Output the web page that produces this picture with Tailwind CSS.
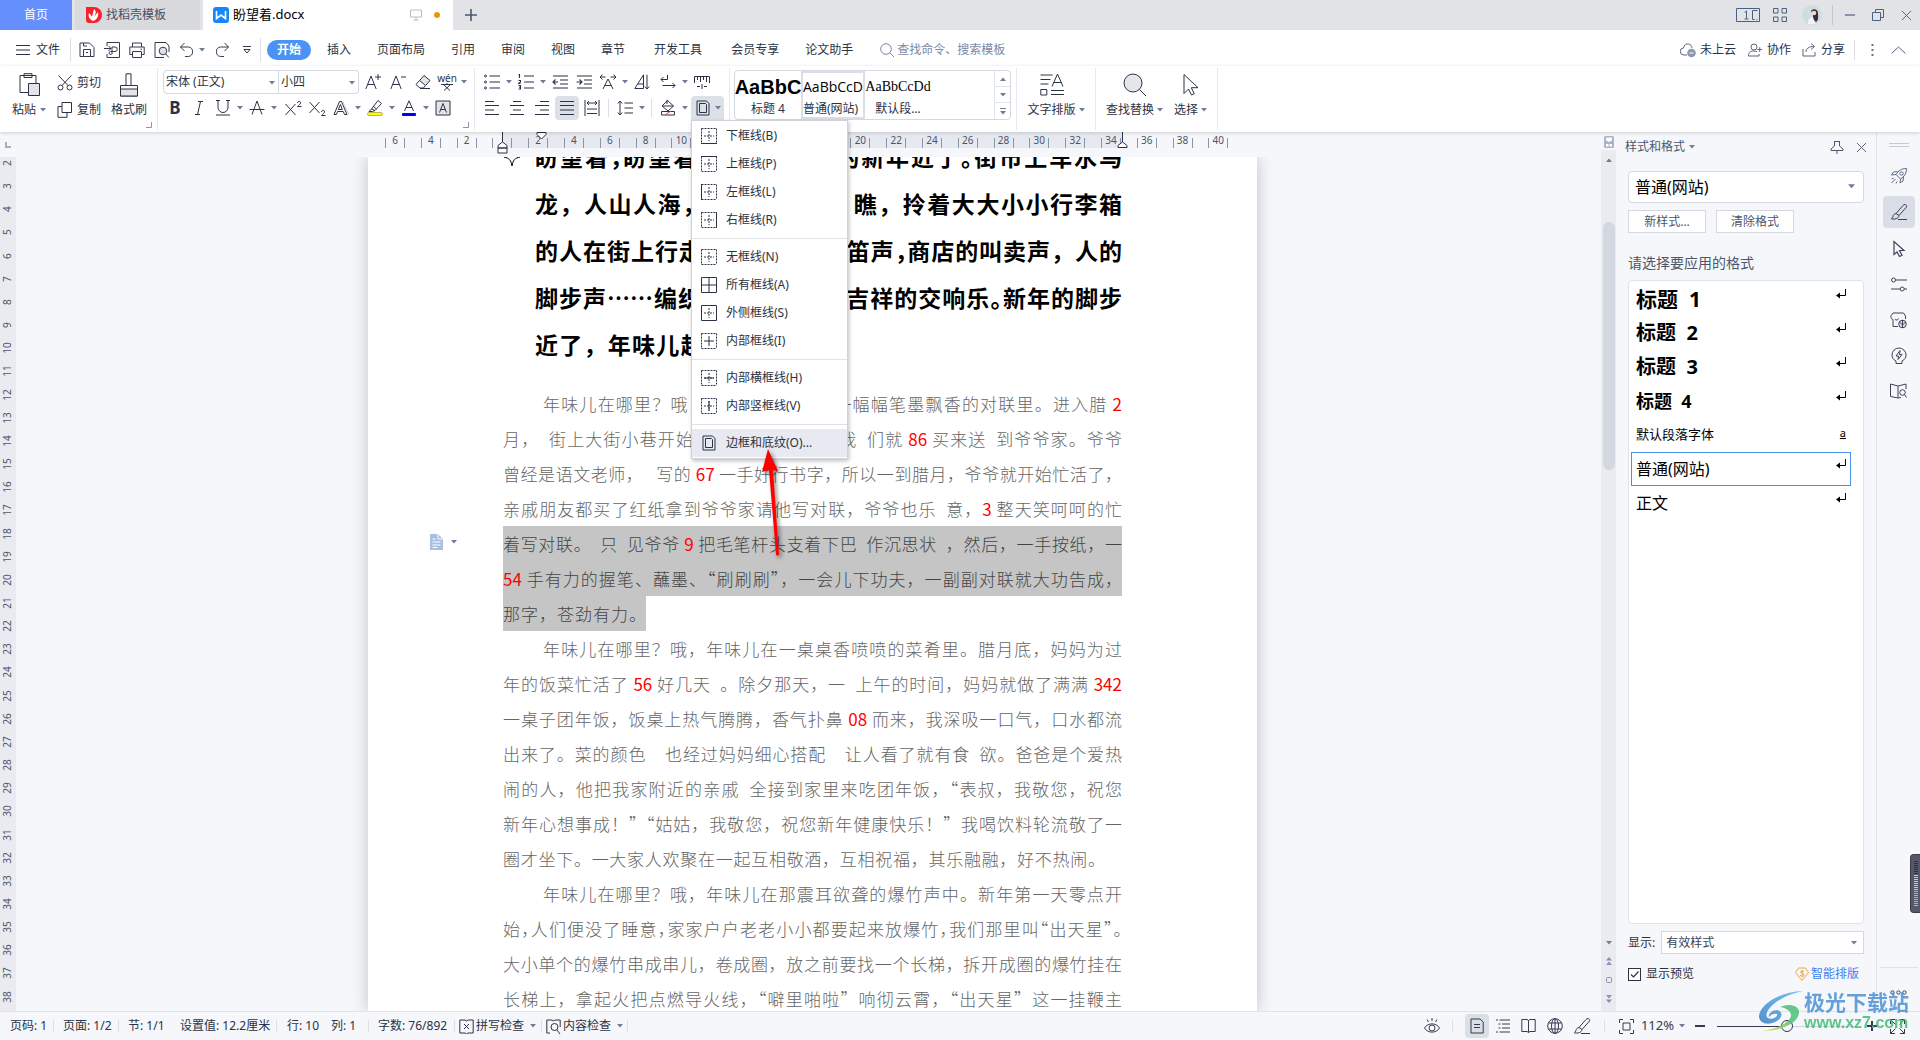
<!DOCTYPE html>
<html lang="zh-CN">
<head>
<meta charset="utf-8">
<title>盼望着.docx</title>
<script src="https://cdn.jsdelivr.net/npm/@tailwindcss/browser@4"></script>
</head>
<body class="h-screen overflow-hidden bg-[#f5f7fa] font-['Noto_Sans','Noto_Sans_CJK_SC',sans-serif] text-xs text-[#2b3245] [&_svg]:shrink-0 [&_svg]:fill-none [&_svg]:stroke-current">

<svg class="absolute size-0" aria-hidden="true">
  <symbol id="caret" viewBox="0 0 6 4"><path d="M0 0h6L3 3.600z" fill="#6f7d98" stroke="none"/></symbol>
  <symbol id="up" viewBox="0 0 6 4"><path d="M0 4h6L3 .4z" fill="#6f7d98" stroke="none"/></symbol>
  <symbol id="corner" viewBox="0 0 6 6"><path d="M5.500 0v5.500H0" stroke="#8a94ab"/></symbol>
  <symbol id="x" viewBox="0 0 12 12"><path d="M1 1l10 10M11 1L1 11"/></symbol>
  <symbol id="ret" viewBox="0 0 10 10"><path d="M9.500 0v6.500H2" stroke="#000"/><path d="M0 6.500l4-3v6z" fill="#000" stroke="none"/></symbol>
  <symbol id="dash" viewBox="0 0 16 16"><path d="M.5.5h15M.5 15.500h15M.5.5v15M15.500.5v15" stroke-dasharray="2 1"/></symbol>
  <symbol id="cross" viewBox="0 0 16 16"><path d="M8 3v10M3 8h10" stroke-dasharray="2 1"/></symbol>
  <symbol id="cursor" viewBox="0 0 18 24"><path d="M2 1.500v19l4.500-4.500 3 6 2.800-1.300-3-6H16z"/></symbol>
  <symbol id="pageborder" viewBox="0 0 14 16"><path d="M1 1h9.500L13 3.500V15H1z"/><path d="M3.500 3.500h6l1 1V12.500h-7z"/></symbol>
  <symbol id="pen" viewBox="0 0 18 18"><path d="M15 1.500c1.500.5 2 1.500 1.500 2.500L9 12.500 6 10.500 13 2.500c.5-.6 1.200-1 2-1zM6 10.500c-2 .5-3 1.500-3 3L1.500 16c3 .3 7 0 7.500-3.500M8 16.500h9"/></symbol>
</svg>

<div class="flex h-full flex-col">

<!-- Window tabs -->
<header class="flex h-[30px] shrink-0 items-center bg-[#e1e3e7] text-[13px]">
  <button class="h-full w-[72px] bg-[#648ffc] text-xs text-white">首页</button>
  <button class="ml-[3px] flex h-full w-[125px] items-center gap-1 bg-[#d9dade] pl-[11px] text-xs text-[#474f63]">
    <svg class="size-4" viewBox="0 0 16 16"><path d="M0 0h8a8 8 0 010 16H3a3 3 0 01-3-3z" fill="#f5222d" stroke="none"/><path d="M7 14C3 12 2 9 3 6l3 3.500L8 2c3 3 1.500 5 0 8l4-5c1 5-1.500 8-5 9z" fill="#fff" stroke="none"/></svg>找稻壳模板</button>
  <button class="ml-[3px] flex h-full w-[250px] items-center gap-1 bg-white pl-[10px] text-left text-black">
    <svg class="size-4" viewBox="0 0 16 16"><rect width="16" height="16" rx="3" fill="#1687fb" stroke="none"/><path d="M3.500 4v7.500L8 8l4.500 3.500V4" stroke="#fff" stroke-width="1.600"/></svg>
    <span class="flex-1">盼望着.docx</span>
    <svg class="h-3 w-3 text-[#b4bccc]" viewBox="0 0 12 12"><path d="M.5 1h11v7H.5zM6 8v3M3.500 11h5"/></svg>
    <span class="mr-[13px] ml-2 size-[6px] rounded-full bg-[#e59a0c]"></span>
  </button>
  <button class="ml-3 text-[#4c5771]" aria-label="新建"><svg class="size-3" viewBox="0 0 12 12"><path d="M6 0v12M0 6h12" stroke-width="1.600"/></svg></button>
  <div class="ml-auto flex items-center pr-2 text-[#4c6080]">
    <svg class="h-[14px] w-6" viewBox="0 0 24 14"><path d="M.5.5h23v13H.5zM16.500 2.500v9M16.500 2.500h5M16.500 11.500h2M20.500 11.500h1M8.500 4.500L10.500 3v8M8.500 11h4"/></svg>
    <svg class="ml-[13px] size-[14px]" viewBox="0 0 14 14"><path d="M.5.5h4.500v4.500H.5zM9 .5h4.500v4.500H9zM.5 9h4.500v4.500H.5zM9 9h4.500v4.500H9z"/></svg>
    <svg class="ml-[15px] size-5" viewBox="0 0 20 20"><circle cx="10" cy="10" r="10" fill="#cfdde2" stroke="none"/><path d="M9 6c2-3 7-2 7 2 0 4 1 7-2 9l-3-3V9z" fill="#3a2c33" stroke="none"/><circle cx="12" cy="8" r="2.300" fill="#f2d5cb" stroke="none"/><path d="M6 19c0-5 2-7 5-7l2 7z" fill="#f1f5f7" stroke="none"/></svg>
    <span class="ml-[10px] h-5 w-px bg-[#c3c7cf]"></span>
    <svg class="ml-3 size-[10px]" viewBox="0 0 10 10"><path d="M0 5h10" stroke-width="1.200"/></svg>
    <svg class="ml-[17px] size-3" viewBox="0 0 12 12"><path d="M.5 3.500h8v8h-8zM3.500 3.500v-3h8v8h-3"/></svg>
    <svg class="ml-[17px] size-[11px]"><use href="#x"/></svg>
  </div>
</header>

<!-- Quick access and ribbon tabs -->
<nav class="flex h-9 shrink-0 items-center bg-white pt-[3px]">
  <button class="ml-4 flex items-center gap-[6px]"><svg class="h-[10px] w-[14px]" viewBox="0 0 14 10"><path d="M0 .5h14M0 5h14M0 9.500h14"/></svg>文件</button>
  <span class="ml-[10px] h-6 w-px bg-[#dcdfe5]"></span>
  <div class="ml-2 flex items-center gap-[9px] text-[#333b4f]">
    <svg class="size-4" viewBox="0 0 16 16"><path d="M1 14.500V1h9.500L15 5.500v9h-3.500v-7h-7v7zM4.500 1v3H8M7 10.500h2M4.500 14.500h7"/></svg>
    <svg class="size-4" viewBox="0 0 16 16"><path d="M3 4V.5h12.500v15H3V12M0 6.500h7M4.500 4L7 6.500 4.500 9M8 12V5h3a2 2 0 010 4.500H6.500a1.500 1.500 0 101.500 2"/></svg>
    <svg class="size-4" viewBox="0 0 16 16"><path d="M3.500 5V1h9v4M3.500 12.500H.8V5h14.400v7.500h-2.700M3.500 9.500h9v6h-9zM11.500 7.200h1.500"/></svg>
    <svg class="size-4" viewBox="0 0 16 16"><path d="M15 10V4l-3-3.500H1v15h9"/><circle cx="9" cy="9" r="3.800" fill="#dfe1e5"/><path d="M11.800 12l3 3.500"/></svg>
    <svg class="size-4" viewBox="0 0 16 16"><path d="M5.500 1L1.500 5l4 4M1.500 5h8a4.800 4.800 0 010 9.500H6"/></svg>
    <svg class="-ml-[5px] h-1 w-[6px]"><use href="#caret"/></svg>
    <svg class="size-4" viewBox="0 0 16 16"><path d="M10.500 1l4 4-4 4M14.500 5h-8a4.800 4.800 0 000 9.500H10"/></svg>
    <svg class="ml-1 h-2 w-2" viewBox="0 0 8 8"><path d="M0 .5h8M1 3.500h6L4 7z"/></svg>
  </div>
  <span class="ml-[9px] h-6 w-px bg-[#dcdfe5]"></span>
  <button class="ml-[6px] h-5 w-11 rounded-full bg-[#4a92f4] font-bold text-white">开始</button>
  <div class="ml-4 flex gap-[26px]">
    <button>插入</button><button>页面布局</button><button>引用</button><button>审阅</button><button>视图</button><button>章节</button><button class="ml-[3px]">开发工具</button><button class="ml-[3px]">会员专享</button><button>论文助手</button>
  </div>
  <label class="ml-[27px] flex items-center gap-[3px] text-[#7c88a3]"><svg class="size-[14px]" viewBox="0 0 14 14"><circle cx="6" cy="6" r="5.300"/><path d="M10 10l4 4"/></svg>
    <input class="w-32 placeholder:text-[#7c88a3]" aria-label="搜索" placeholder="查找命令、搜索模板"></label>
  <div class="ml-auto flex items-center pr-[14px]">
    <button class="flex items-center gap-1"><svg class="size-4 text-[#5b647a]" viewBox="0 0 16 16"><path d="M7 13H4A3.500 3.500 0 013.500 6C4 3 6 1.500 8.500 2c2 .4 3.500 2 3.500 4"/><circle cx="11.500" cy="11" r="4.300" fill="#8b97ae" stroke="none"/><path d="M9.500 11h4" stroke="#fff"/></svg>未上云</button>
    <button class="ml-3 flex items-center gap-[5px]"><svg class="size-[14px] text-[#5b647a]" viewBox="0 0 14 14"><circle cx="6" cy="4" r="3"/><path d="M.5 13c0-4 2-5 5.500-5 1 0 2 .2 3 .7M.5 13H11v-2M9.500 6.500H14M11.700 4.200v4.600"/></svg>协作</button>
    <button class="ml-[11px] flex items-center gap-[5px]"><svg class="size-[14px] text-[#5b647a]" viewBox="0 0 14 14"><path d="M1 6v7h12V9M4 9c0-3.500 3-5.500 8-5.500M9 .5l3.500 3L9 6.500"/></svg>分享</button>
    <span class="ml-[9px] h-5 w-px bg-[#dcdfe5]"></span>
    <svg class="ml-4 h-3 w-[3px]" viewBox="0 0 3 12"><path d="M.5 1h2M.5 6h2M.5 11h2" stroke-width="2" stroke="#6b7387"/></svg>
    <svg class="ml-[17px] h-2 w-[15px] text-[#5b647a]" viewBox="0 0 15 8"><path d="M.5 7.500l7-6.500 7 6.500"/></svg>
  </div>
</nav>

<!-- Ribbon -->
<section class="relative z-20 flex h-[66px] shrink-0 items-start bg-white pt-[2px] shadow-[0_1px_4px_rgba(0,0,0,0.16)]">
  <!-- Clipboard -->
  <div class="relative flex h-[62px] w-[158px] border-r border-[#e8eaee] pl-3">
    <button class="flex w-[42px] flex-col items-start pt-[5px]"><svg class="ml-[7px] size-6" viewBox="0 0 24 24"><path d="M9 19.500H1V2.500h16V10M5 2.500V.7h8v1.800M5 4.500h8v-2H5z"/><path d="M9.500 10.500h11v12h-11z" fill="#e2e4e8"/></svg><span class="flex items-center gap-1 leading-[26px]">粘贴<svg class="h-1 w-[6px]"><use href="#caret"/></svg></span></button>
    <div class="flex w-12 flex-col gap-[5px] pt-1">
      <button class="flex items-center gap-1 leading-[22px]"><svg class="ml-[3px] size-4" viewBox="0 0 16 16"><circle cx="3.500" cy="12.500" r="2.500"/><circle cx="12.500" cy="12.500" r="2.500"/><path d="M1.500.5l9.500 10M14.500.5L5 10.500"/></svg>剪切</button>
      <button class="flex items-center gap-1 leading-[22px]"><svg class="ml-[3px] size-4" viewBox="0 0 16 16"><path d="M5 .5h9.500v10H5zM5 4.500H1v10.800h9V10.500"/></svg>复制</button>
    </div>
    <button class="ml-[7px] flex w-10 flex-col items-center pt-[5px]"><svg class="size-6" viewBox="0 0 24 24"><path d="M3.500 12.500h17v10.500h-17z" fill="#fff"/><path d="M3.500 16h17v7h-17z" fill="#e2e4e8"/><path d="M9 12.500V.8h5v11.700"/></svg><span class="leading-[26px]">格式刷</span></button>
    <svg class="absolute right-[5px] bottom-[2px] size-[6px]"><use href="#corner"/></svg>
  </div>

  <!-- Font -->
  <div class="relative h-[62px] w-[317px] border-r border-[#e8eaee] pt-[2px] pl-[5px]">
    <div class="flex h-6 items-center">
      <div class="relative h-6 w-[116px] rounded-l-sm border border-[#d5d8de]"><select aria-label="字体" class="h-full w-full appearance-none pl-[2px]"><option>宋体 (正文)</option></select><svg class="absolute top-[10px] right-[3px] h-1 w-[6px]"><use href="#caret"/></svg></div>
      <div class="relative h-6 w-20 rounded-r-sm border border-l-0 border-[#d5d8de]"><select aria-label="字号" class="h-full w-full appearance-none pl-[2px]"><option>小四</option></select><svg class="absolute top-[10px] right-[3px] h-1 w-[6px]"><use href="#caret"/></svg></div>
      <button class="ml-[2px] flex w-6 justify-center" aria-label="增大字号"><svg class="size-4" viewBox="0 0 16 16"><path d="M.8 15L6 2l5.200 13M2.700 10.500h6.600M13 0v6M10 3h6"/></svg></button>
      <button class="flex w-[26px] justify-center" aria-label="减小字号"><svg class="size-4" viewBox="0 0 16 16"><path d="M.8 15L6 2l5.200 13M2.700 10.500h6.600M11 3h5"/></svg></button>
      <button class="flex w-6 justify-center" aria-label="清除格式"><svg class="size-4" viewBox="0 0 16 16"><path d="M9 1.500l6 5-4.500 5-6-5z" fill="#e2e4e8"/><path d="M4.500 6.500L1 10.500 5 14h3.500l2-2.500M5 14.500h10"/></svg></button>
      <button class="flex w-6 flex-col items-center text-[10px] leading-[9px]" aria-label="拼音指南"><span>wén</span><svg class="h-2 w-3" viewBox="0 0 12 8"><path d="M0 1.500h12M6 0v1.500M3 2l6 5.500M9 2L3 7.500"/></svg></button>
      <svg class="h-1 w-[10px]"><use href="#caret"/></svg>
    </div>
    <div class="mt-[3px] flex h-[22px] items-center [&_button]:flex [&_button]:w-6 [&_button]:justify-center">
      <button aria-label="加粗"><span class="text-[17px] leading-5 font-bold">B</span></button>
      <button aria-label="倾斜"><svg class="size-4" viewBox="0 0 16 16"><path d="M7 1.500h5M4 14.500h5M9.500 1.500l-3 13"/></svg></button>
      <button aria-label="下划线"><svg class="size-4" viewBox="0 0 16 16"><path d="M1 .5h4M11 .5h4M3 .5v7a5 5 0 0010 0v-7M1 15h14"/></svg></button>
      <svg class="h-1 w-[10px]"><use href="#caret"/></svg>
      <button aria-label="删除线"><svg class="size-4" viewBox="0 0 16 16"><path d="M3 14.500L8 1l5 13.500M.5 9.500h15"/></svg></button>
      <svg class="h-1 w-[10px]"><use href="#caret"/></svg>
      <button class="ml-[2px]" aria-label="上标"><svg class="size-[17px]" viewBox="0 0 17 16"><path d="M.5 3.500l10 11M10.500 3.500l-10 11M12.500 2.500c.3-2.500 3.500-2 3 0-.2 1.200-1.500 2-3 3.500h4"/></svg></button>
      <button aria-label="下标"><svg class="size-[17px]" viewBox="0 0 17 16"><path d="M.5 1.500l10 11M10.500 1.500l-10 11M12.500 11.500c.3-2.500 3.500-2 3 0-.2 1.200-1.500 2-3 3.500h4"/></svg></button>
      <button aria-label="文字效果"><svg class="size-4" viewBox="0 0 16 16"><path d="M1 14.500L6.500 1.500h2l5.500 13h-2.500l-1.200-3H4.600l-1.200 3zM5.300 9.500h4L7.500 4.500z"/><path d="M9.500 1.500L15.500 14" stroke="#c5cad4"/></svg></button>
      <svg class="h-1 w-[10px]"><use href="#caret"/></svg>
      <button aria-label="突出显示"><svg class="size-4" viewBox="0 0 16 16"><path d="M11 .5l3.500 3L8 10.500 4.500 9zM4.500 9L2 11.500h3.500L8 10.500M6 6l3.500 3"/><rect x=".5" y="12.500" width="15" height="3" rx="1.500" fill="#ff0" stroke="#8a8a30" stroke-width=".6"/></svg></button>
      <svg class="h-1 w-[10px]"><use href="#caret"/></svg>
      <button aria-label="字体颜色"><svg class="size-4" viewBox="0 0 16 16"><path d="M3.500 11L8 .8 12.500 11M5 7.500h6"/><rect x="1" y="13" width="14" height="3" rx="1" fill="#00f" stroke="none"/></svg></button>
      <svg class="h-1 w-[10px]"><use href="#caret"/></svg>
      <button aria-label="字符底纹"><svg class="size-4" viewBox="0 0 16 16"><path d="M1 1h14v14H1z" fill="#e2e4e8"/><path d="M4.500 12.500L8 3.500l3.500 9M5.800 9.500h4.400"/></svg></button>
    </div>
    <svg class="absolute right-[5px] bottom-[2px] size-[6px]"><use href="#corner"/></svg>
  </div>

  <!-- Paragraph -->
  <div class="h-[62px] w-[255px] border-r border-[#e8eaee] pt-[2px] pl-[5px]">
    <div class="flex h-6 items-center [&_button]:flex [&_button]:w-6 [&_button]:justify-center">
      <button aria-label="项目符号"><svg class="size-4" viewBox="0 0 16 16"><circle cx="1.500" cy="2" r="1"/><circle cx="1.500" cy="8" r="1"/><circle cx="1.500" cy="14" r="1"/><path d="M5.500 2H16M5.500 8H16M5.500 14H16" stroke-width="1.200"/></svg></button>
      <svg class="h-1 w-[10px]"><use href="#caret"/></svg>
      <button aria-label="编号"><svg class="size-4" viewBox="0 0 16 16"><path d="M.5 1l1-.5V4M.5 6.500h2v1.500l-2 1.500h2M.5 11.500h2V15h-2M1 13.200h1.500M6 2h10M6 8h10M6 14h10" stroke-width="1.100"/></svg></button>
      <svg class="h-1 w-[10px]"><use href="#caret"/></svg>
      <button aria-label="减少缩进"><svg class="size-4" viewBox="0 0 16 16"><path d="M1 2h15M8 6h8M8 10h8M1 14h15M6 8H1M3.500 5.500L1 8l2.500 2.500" stroke-width="1.100"/></svg></button>
      <button aria-label="增加缩进"><svg class="size-4" viewBox="0 0 16 16"><path d="M1 2h15M8 6h8M8 10h8M1 14h15M.5 8h5M3.500 5.500L6 8l-2.500 2.500" stroke-width="1.100"/></svg></button>
      <button aria-label="中文版式"><svg class="size-4" viewBox="0 0 16 16"><path d="M3 15l5-10 5 10M5 11.500h6M0 3h5.500M2.500.5L0 3l2.500 2.500M10.500 3H16M13.500.5L16 3l-2.500 2.500"/></svg></button>
      <svg class="h-1 w-[10px]"><use href="#caret"/></svg>
      <button aria-label="排序"><svg class="size-4" viewBox="0 0 16 16"><path d="M.8 14.500L9.500.8v13.700zM4 10h5.500M13 .8v14M10.800 12.500l2.200 2.500 2.200-2.500"/></svg></button>
      <button class="ml-[2px]" aria-label="换行符"><svg class="size-4" viewBox="0 0 16 16"><path d="M7.500 1v4.500H1M3.500 3L1 5.500 3.500 8M2.500 11.500H15M12.500 9l2.500 2.500-2.500 2.500"/></svg></button>
      <svg class="h-1 w-[10px]"><use href="#caret"/></svg>
      <button aria-label="标尺"><svg class="size-4" viewBox="0 0 16 16"><path d="M.5 9V2.500h15V9M3.500 3v3M6.500 3v5M9.500 3v3M12.500 3v5M3 12.500h3M10 12.500h3M8 10v5"/></svg></button>
    </div>
    <div class="mt-[3px] flex h-[22px] items-center [&_button]:flex [&_button]:w-6 [&_button]:justify-center">
      <button aria-label="左对齐"><svg class="size-4" viewBox="0 0 16 16"><path d="M1 1.500h9M1 5.500h14M1 10h9M1 14.500h14" stroke-width="1.200"/></svg></button>
      <button class="ml-px" aria-label="居中"><svg class="size-4" viewBox="0 0 16 16"><path d="M4 1.500h8M1 5.500h14M4 10h8M1 14.500h14" stroke-width="1.200"/></svg></button>
      <button class="ml-px" aria-label="右对齐"><svg class="size-4" viewBox="0 0 16 16"><path d="M6 1.500h9M1 5.500h14M6 10h9M1 14.500h14" stroke-width="1.200"/></svg></button>
      <button class="ml-px h-6 items-center rounded-sm bg-[#dce1e7]" aria-label="两端对齐"><svg class="size-4" viewBox="0 0 16 16"><path d="M1 1.500h14M1 5.500h14M1 10h14M1 14.500h14" stroke-width="1.200"/></svg></button>
      <button class="ml-px" aria-label="分散对齐"><svg class="size-4" viewBox="0 0 16 16"><path d="M1 0v16M15 0v16M3 3h10M5 1L3 3l2 2M11 1l2 2-2 2M3 9h10M3 13.500h10"/></svg></button>
      <span class="mx-1 h-[18px] w-px bg-[#dcdfe5]"></span>
      <button aria-label="行距"><svg class="size-4" viewBox="0 0 16 16"><path d="M3 1v14M.8 3.500L3 1l2.200 2.500M.8 12.500L3 15l2.200-2.500M7.500 3H16M7.500 8H16M7.500 13H16"/></svg></button>
      <svg class="h-1 w-[10px]"><use href="#caret"/></svg>
      <span class="mx-1 h-[18px] w-px bg-[#dcdfe5]"></span>
      <button aria-label="底纹颜色"><svg class="size-4" viewBox="0 0 16 16"><path d="M7.500.5l6 5.500L8 11 2 6zM2 6h11.500M7 0v4"/><path d="M1.500 11.500h13v3.500h-13z" fill="#fff"/><path d="M5 15l6-4" stroke="#e04040"/></svg></button>
      <svg class="h-1 w-[10px]"><use href="#caret"/></svg>
      <div class="relative ml-px h-6 w-[33px] rounded-t-sm bg-[#dce1e7]">
        <div class="flex h-full items-center"><button aria-label="边框"><svg class="h-4 w-[14px]"><use href="#pageborder"/></svg></button><svg class="h-1 w-[6px]"><use href="#caret"/></svg></div>
        <!-- Border menu -->
        <div class="absolute top-6 left-0 w-[157px] border border-[#cfd2d8] bg-white py-px shadow-[1px_2px_4px_rgba(0,0,0,0.25)] [&_.item]:h-7 [&_.item]:w-full [&_.item]:items-center [&_.item]:justify-start [&_.item]:gap-[9px] [&_.item]:pl-[9px]">
          <button class="item"><svg class="size-4"><use href="#dash"/><use href="#cross"/><path d="M0 15.500h16"/></svg>下框线(B)</button>
          <button class="item"><svg class="size-4"><use href="#dash"/><use href="#cross"/><path d="M0 .5h16"/></svg>上框线(P)</button>
          <button class="item"><svg class="size-4"><use href="#dash"/><use href="#cross"/><path d="M.5 0v16"/></svg>左框线(L)</button>
          <button class="item"><svg class="size-4"><use href="#dash"/><use href="#cross"/><path d="M15.500 0v16"/></svg>右框线(R)</button>
          <hr class="my-1 border-[#e0e2e6]">
          <button class="item"><svg class="size-4"><use href="#dash"/><use href="#cross"/></svg>无框线(N)</button>
          <button class="item"><svg class="size-4"><path d="M.5.5h15v15H.5zM8 0v16M0 8h16"/></svg>所有框线(A)</button>
          <button class="item"><svg class="size-4"><use href="#cross"/><path d="M.5.5h15v15H.5z"/></svg>外侧框线(S)</button>
          <button class="item"><svg class="size-4"><use href="#dash"/><path d="M8 3v10M3 8h10"/></svg>内部框线(I)</button>
          <hr class="my-1 border-[#e0e2e6]">
          <button class="item"><svg class="size-4"><use href="#dash"/><use href="#cross"/><path d="M3 8h10"/></svg>内部横框线(H)</button>
          <button class="item"><svg class="size-4"><use href="#dash"/><use href="#cross"/><path d="M8 3v10"/></svg>内部竖框线(V)</button>
          <hr class="my-1 border-[#e0e2e6]">
          <button class="item bg-[#e7eaf0]"><svg class="h-4 w-4"><use href="#pageborder"/></svg>边框和底纹(O)...</button>
          <svg class="absolute top-[326px] left-[67px] h-[112px] w-7 drop-shadow-[2px_2px_2px_rgba(0,0,0,0.5)]" viewBox="0 0 28 112"><path d="M9 2L19 24l-5-1 6 84c0 2-3 2-3 0L10 23l-7 2z" fill="#f00" stroke="none"/></svg>
        </div>
      </div>
    </div>
  </div>

  <!-- Style gallery -->
  <div class="h-[62px] w-[287px] border-r border-[#e8eaee] pt-[2px] pl-1">
    <div class="flex h-[50px] w-[277px] rounded-sm border border-[#d5d8de]">
      <button class="flex w-[66px] flex-col items-center overflow-hidden"><span class="h-[30px] font-['Liberation_Sans',sans-serif] text-[20px] leading-[32px] font-bold text-black">AaBbC</span>标题 4</button>
      <button class="flex w-16 flex-col items-start overflow-hidden border-2 border-[#dcdee5]"><span class="h-7 font-['Open_Sans',sans-serif] text-[14px] leading-[28px] whitespace-nowrap text-black">AaBbCcD</span>普通(网站)</button>
      <button class="flex w-[66px] flex-col items-center overflow-hidden"><span class="h-[30px] font-['Liberation_Serif',serif] text-[14px] leading-[32px] text-black">AaBbCcDd</span>默认段...</button>
      <div class="ml-auto grid w-4 grid-rows-3 divide-y divide-[#e1e4e9] border-l border-[#e1e4e9] [&_button]:flex [&_button]:items-center [&_button]:justify-center">
        <button aria-label="上一行"><svg class="h-1 w-[6px]"><use href="#up"/></svg></button>
        <button aria-label="下一行"><svg class="h-1 w-[6px]"><use href="#caret"/></svg></button>
        <button aria-label="更多样式"><svg class="h-[7px] w-[6px]" viewBox="0 0 6 7"><path d="M0 .5h6" stroke="#6f7d98"/><path d="M0 3h6L3 6.500z" fill="#6f7d98" stroke="none"/></svg></button>
      </div>
    </div>
  </div>

  <div class="flex h-[62px] w-[79px] justify-center border-r border-[#e8eaee] pt-[5px]">
    <button class="flex flex-col items-center"><svg class="mr-2 size-6" viewBox="0 0 24 24"><path d="M.5 2h12M.5 6.500h10M.5 11h8M.8 16.500h6v5.500h-6zM11 17.500h13M11 21.500h13M12 13.500L17.500 1 23 13.500M13.500 9.500h8"/></svg><span class="flex items-center gap-[3px] leading-[26px]">文字排版<svg class="h-1 w-[6px]"><use href="#caret"/></svg></span></button>
  </div>
  <div class="flex h-[62px] w-[122px] border-r border-[#e8eaee] pt-[5px] pl-[10px]">
    <button class="flex flex-col items-center"><svg class="size-6" viewBox="0 0 24 24"><circle cx="10" cy="10" r="9" fill="#e4e6e9"/><path d="M16.500 16.500l6.500 6.500"/></svg><span class="flex items-center gap-[3px] leading-[26px]">查找替换<svg class="h-1 w-[6px]"><use href="#caret"/></svg></span></button>
    <button class="ml-[11px] flex flex-col items-center"><svg class="h-6 w-[18px]"><use href="#cursor"/></svg><span class="flex items-center gap-[3px] leading-[26px]">选择<svg class="h-1 w-[6px]"><use href="#caret"/></svg></span></button>
  </div>
</section>

<!-- Workspace -->
<main class="flex min-h-0 flex-1">
  <div class="flex min-w-0 flex-1 flex-col">
    <!-- Horizontal ruler -->
    <div class="flex h-[25px] shrink-0">
      <div class="flex w-4 items-center justify-center"><svg class="size-[6px]" viewBox="0 0 6 6"><path d="M1 0v5h5" stroke="#a9afbd" stroke-width="2"/></svg></div>
      <div class="flex flex-1 justify-center pl-2">
        <div class="relative w-[889px]">
          <div class="ml-[134px] h-4 w-[621px] bg-[#e6e9f0]"></div>
          <div id="hruler" class="absolute top-0 left-[17px] flex h-4 w-[859px] text-[10px] leading-[15px] text-[#4d5568]"></div>
          <svg class="absolute top-0 left-[129px] h-[22px] w-[11px]" viewBox="0 0 11 22"><path d="M5.500 0v10M1 16v-2.500L5.500 10l4.500 3.500V16zM1 16h9v5H1z" fill="#fff"/></svg>
          <svg class="absolute top-0 left-[168px] h-2 w-[11px]" viewBox="0 0 11 8"><path d="M1 .5h9v2L5.500 7 1 2.500z" fill="#fff"/></svg>
          <svg class="absolute top-0 left-[749px] h-4 w-[11px]" viewBox="0 0 11 16"><path d="M5.500 0v10M1 15.500v-2L5.500 10l4.500 3.500v2z" fill="#fff"/></svg>
        </div>
      </div>
    </div>
    <div class="flex min-h-0 flex-1">
      <!-- Vertical ruler -->
      <div id="vruler" class="flex w-4 shrink-0 flex-col justify-between bg-[#e9ebf1] pb-2 text-[10px] text-[#4d5568]"></div>
      <div class="flex flex-1 justify-center overflow-hidden pl-2">
        <article class="relative w-[889px] shrink-0 bg-white px-[135px] font-['Noto_Sans_CJK_SC',sans-serif] shadow-[0_0_16px_rgba(0,0,0,0.22)] [&_i]:not-italic [&_i]:[font-feature-settings:'halt'] [&_p]:[text-align-last:justify] [&_p]:whitespace-nowrap">
          <section class="relative -mt-6 pl-8 text-[23px] leading-[47px] font-bold text-black">
            <svg class="absolute top-[14px] left-0 h-5 w-[18px]" viewBox="0 0 18 20"><path d="M9 1c1 6 3 8 8 9-5 1-7 3-8 9-1-6-3-8-8-9 5-1 7-3 8-9z"/></svg>
            <p>盼望着<i>，</i>盼望着<i>，</i>热闹又喜庆的新年近了<i>。</i>街市上车水马</p>
            <p>龙，人山人海，好不热闹呀，瞧，拎着大大小小行李箱</p>
            <p>的人在街上行走，小汽车的鸣笛声<i>，</i>商店的叫卖声，人的</p>
            <p>脚步声……编织成为了一首首吉祥的交响乐<i>。</i>新年的脚步</p>
            <p class="w-[290px]">近了，年味儿越来越浓了。</p>
          </section>
          <section class="relative mt-[18px] text-[17px] leading-[35px] font-light text-[#666] [&_b]:font-normal [&_b]:text-[#f00]">
            <p class="pl-10">年味儿在哪里？哦，年味儿在爷爷那一幅幅笔墨飘香的对联里。进入腊 <b>2</b></p>
            <p>月，&nbsp; 街上大街小巷开始卖起了红纸对联。我&nbsp; 们就 <b>86</b> 买来送&nbsp; 到爷爷家。爷爷</p>
            <p>曾经是语文老师，&nbsp; &nbsp;写的 <b>67</b> 一手好行书字，所以一到腊月，爷爷就开始忙活了，</p>
            <p>亲戚朋友都买了红纸拿到爷爷家请他写对联，爷爷也乐&nbsp; 意，<b>3</b> 整天笑呵呵的忙</p>
            <div class="bg-[#c5c5c5] text-[#444] [&_b]:text-[#c80000]">
              <p>着写对联。&nbsp; 只&nbsp; 见爷爷 <b>9</b> 把毛笔杆头支着下巴&nbsp; 作沉思状&nbsp; ，然后，一手按纸，一</p>
              <p><b>54</b> 手有力的握笔、蘸墨、“刷刷刷”，一会儿下功夫，一副副对联就大功告成，</p>
            </div>
            <p class="w-[143px] bg-[#c5c5c5] text-[#444]">那字，苍劲有力。</p>
            <p class="pl-10">年味儿在哪里？哦，年味儿在一桌桌香喷喷的菜肴里。腊月底，妈妈为过</p>
            <p>年的饭菜忙活了 <b>56</b> 好几天&nbsp; 。除夕那天，一&nbsp; 上午的时间，妈妈就做了满满 <b>342</b></p>
            <p>一桌子团年饭，饭桌上热气腾腾，香气扑鼻 <b>08</b> 而来，我深吸一口气，口水都流</p>
            <p>出来了。菜的颜色&nbsp; &nbsp; 也经过妈妈细心搭配&nbsp; &nbsp; 让人看了就有食&nbsp; 欲。爸爸是个爱热</p>
            <p>闹的人，他把我家附近的亲戚&nbsp; 全接到家里来吃团年饭，“表叔，我敬您，祝您</p>
            <p>新年心想事成！”“姑姑，我敬您，祝您新年健康快乐！”我喝饮料轮流敬了一</p>
            <p class="w-[602px]">圈才坐下。一大家人欢聚在一起互相敬酒，互相祝福，其乐融融，好不热闹。</p>
            <p class="pl-10">年味儿在哪里？哦，年味儿在那震耳欲聋的爆竹声中。新年第一天零点开</p>
            <p>始<i>，</i>人们便没了睡意<i>，</i>家家户户老老小小都要起来放爆竹<i>，</i>我们那里叫<i>“</i>出天星<i>”。</i></p>
            <p>大小单个的爆竹串成串儿，卷成圈，放之前要找一个长梯，拆开成圈的爆竹挂在</p>
            <p>长梯上，拿起火把点燃导火线，“噼里啪啦”响彻云霄，“出天星”这一挂鞭主</p>
            <button class="absolute top-[148px] -left-[73px] flex items-center gap-2" aria-label="段落布局"><svg class="h-4 w-[13px]" viewBox="0 0 13 16"><path d="M0 0h8l5 5v11H0z" fill="#a9bfe2" stroke="none"/><path d="M8 0v5h5M2.500 5h3M2.500 8h8M2.500 11h8M2.500 13.500h5" stroke="#fff"/></svg><svg class="h-1 w-[6px]"><use href="#caret"/></svg></button>
          </section>
        </article>
      </div>
    </div>
  </div>

  <!-- Vertical scrollbar -->
  <div class="flex w-[15px] shrink-0 flex-col items-center">
    <svg class="mt-1 h-3 w-[10px]" viewBox="0 0 10 12"><rect width="10" height="12" rx="1.500" fill="#a9b4cb" stroke="none"/><path d="M2 1.500h6v3L5 6 2 4.500zM2 8h2.500v2.500H2zM5.500 8H8v2.500H5.500z" fill="#fff" stroke="none"/></svg>
    <div class="mt-[2px] flex w-full flex-1 flex-col items-center bg-[#e9ebf1] pt-2 pb-2">
      <svg class="h-1 w-[6px]"><use href="#up"/></svg>
      <div class="mt-[60px] h-[248px] w-3 rounded-full bg-[#d3d7e0]"></div>
      <div class="mt-auto flex flex-col items-center gap-3">
        <svg class="h-1 w-[6px]"><use href="#caret"/></svg>
        <svg class="h-2 w-[6px]" viewBox="0 0 6 8"><path d="M0 3.500h6L3 0zM0 8h6L3 4.500z" fill="#8493b0" stroke="none"/></svg>
        <svg class="size-[6px]" viewBox="0 0 6 6"><rect x=".5" y=".5" width="5" height="5" rx="1" stroke="#8493b0"/></svg>
        <svg class="h-2 w-[6px]" viewBox="0 0 6 8"><path d="M0 0h6L3 3.500zM0 4.500h6L3 8z" fill="#8493b0" stroke="none"/></svg>
      </div>
    </div>
  </div>

  <!-- Styles pane -->
  <aside class="flex w-[261px] shrink-0 flex-col border-r border-[#e0e3e8] px-3">
    <div class="flex h-[39px] items-start pt-[7px] text-[#4d566c]">
      <h2 class="-ml-[3px] flex items-center gap-1">样式和格式<svg class="h-1 w-[6px]"><use href="#caret"/></svg></h2>
      <svg class="mt-[2px] ml-auto h-[13px] w-[14px]" viewBox="0 0 14 13"><path d="M4 .5h6M4.500.5v4.500L1 8v1.500h12V8L9.500 5V.5M7 9.500V13"/></svg>
      <svg class="mt-[3px] mr-[-3px] ml-3 size-[11px]"><use href="#x"/></svg>
    </div>
    <div class="relative h-8 rounded-sm border border-[#d5d8de] bg-white"><select aria-label="当前样式" class="h-full w-full appearance-none pl-[6px] text-base text-black"><option>普通(网站)</option></select><svg class="absolute top-[12px] right-[8px] h-[5px] w-[7px]"><use href="#caret"/></svg></div>
    <div class="mt-[7px] flex gap-[10px]">
      <button class="h-[23px] w-[78px] border border-[#d5d8de] bg-white text-[#4d566c]">新样式...</button>
      <button class="h-[23px] w-[78px] border border-[#d5d8de] bg-white text-[#4d566c]">清除格式</button>
    </div>
    <h3 class="mt-5 h-[27px] text-sm text-[#4d566c]">请选择要应用的格式</h3>
    <ul class="flex-1 rounded-sm border border-[#dfe2e7] bg-white py-px pr-3 pl-[2px] text-black [&_button]:flex [&_button]:h-[34px] [&_button]:w-full [&_button]:items-center [&_button]:justify-between [&_button]:pr-[5px] [&_button]:pl-[5px] [&_button_svg]:mb-[10px]">
      <li><button><span class="text-[21px] leading-8 font-bold">标题&nbsp; 1</span><svg class="size-[10px]"><use href="#ret"/></svg></button></li>
      <li><button><span class="text-[20px] leading-8 font-bold">标题&nbsp; 2</span><svg class="size-[10px]"><use href="#ret"/></svg></button></li>
      <li><button><span class="text-[20px] leading-8 font-bold">标题&nbsp; 3</span><svg class="size-[10px]"><use href="#ret"/></svg></button></li>
      <li><button><span class="text-[18px] leading-8 font-bold">标题&nbsp; 4</span><svg class="size-[10px]"><use href="#ret"/></svg></button></li>
      <li><button><span class="text-[13px]">默认段落字体</span><span class="mb-1 text-[11px] underline">a</span></button></li>
      <li class="border border-[#4a90e8] [&>button]:h-8 [&>button]:px-1"><button><span class="text-base">普通(网站)</span><svg class="size-[10px]"><use href="#ret"/></svg></button></li>
      <li><button><span class="text-base">正文</span><svg class="size-[10px]"><use href="#ret"/></svg></button></li>
    </ul>
    <div class="mt-[7px] flex items-center gap-[6px]"><label for="show" class="whitespace-nowrap">显示:</label>
      <div class="relative h-[23px] flex-1 border border-[#d5d8de] bg-white"><select id="show" class="h-full w-full appearance-none pl-1 text-[#3c4458]"><option>有效样式</option></select><svg class="absolute top-[9px] right-[6px] h-1 w-[6px]"><use href="#caret"/></svg></div></div>
    <div class="mt-[11px] mb-7 flex h-[18px] items-center">
      <label class="flex items-center gap-[5px]"><span class="relative size-[13px]"><input type="checkbox" checked class="block size-[13px] appearance-none border border-[#2b3245] bg-white"><svg class="pointer-events-none absolute inset-0 size-[13px]" viewBox="0 0 13 13"><path d="M3 6.500L5.500 9 10.500 3.500" stroke-width="1.200"/></svg></span>显示预览</label>
      <a href="#" class="mr-[5px] ml-auto flex items-center gap-[2px] text-[#3f7ef0]"><svg class="size-[14px] text-[#eda73a]" viewBox="0 0 14 14"><path d="M3.500 1h7l3 4.500L7 13.500.5 5.500z"/><path d="M9 4.500c-1-1-3.500-.8-3.500.5S9 6 9 7.800 6 9.500 5 8.200M7.200 3v7.500"/></svg>智能排版</a>
    </div>
  </aside>

  <!-- Tool rail -->
  <aside class="flex w-[43px] shrink-0 flex-col items-center text-[#3b4357]">
    <span class="mt-[11px] h-1 w-5 border-y border-[#c6cad2]"></span>
    <svg class="mt-5 size-[18px] text-[#5d6a86]" viewBox="0 0 18 18"><path d="M16.500 1.500c-5 0-8 2-10.500 6l4.500 4.500c4-2.500 6-5.500 6-10.500zM6 7.500L1.500 8l2-3 4-.5M10.500 12L10 16l3-2 .5-4M1.500 12l2-1M1.500 16l4-4M6 16.500l1-2"/><circle cx="11.500" cy="6.500" r="1.700"/></svg>
    <button class="mt-[11px] flex h-8 w-8 items-center justify-center rounded-sm bg-[#d9dee6]" aria-label="样式"><svg class="size-[18px]"><use href="#pen"/></svg></button>
    <svg class="mt-3 h-[18px] w-[14px]" viewBox="0 0 14 18"><path d="M2 1.500v13l3-2.500 2.500 4.500 2.500-1.300-2.500-4.700h4.500z" stroke-width="1.200"/></svg>
    <svg class="mt-[19px] size-4" viewBox="0 0 16 16"><circle cx="2.500" cy="3" r="2"/><path d="M4.500 3H16M0 12h9M13 12h3"/><circle cx="11.200" cy="12" r="2"/></svg>
    <svg class="mt-[19px] size-[17px]" viewBox="0 0 17 17"><path d="M3 7.500v7h5M3 7.500C.5 7 .5 4 1.500 3L3 1h10.500L15.500 4v3M5 7.500c1.500 1 3 .5 3.500-1"/><circle cx="12.500" cy="12" r="3.800" fill="#dfe2e8"/><path d="M12.500 8v8M9.500 10l3 3 3-3"/></svg>
    <svg class="mt-[18px] size-[18px]" viewBox="0 0 18 18"><path d="M6 14C3 12.500 2 10.500 2 8a7 7 0 0114 0c0 2.500-1 4.500-4 6v2.500H6z"/><path d="M10 3.500L6 9h2.500L8 12.500l4-5H9.500z"/></svg>
    <svg class="mt-[18px] h-4 w-[17px]" viewBox="0 0 17 16"><path d="M8 3L.5 1v12.500L8 15zM8 3l8-2v5M8 15l3-.5"/><circle cx="12.500" cy="9.500" r="2.800"/><path d="M14.500 11.500l2 3"/></svg>
    <span class="mt-auto h-px w-[38px] bg-[#dfe2e7]"></span>
    <svg class="mt-[22px] mb-4 h-[5px] w-[17px]" viewBox="0 0 17 5"><circle cx="2.500" cy="2.500" r="1.700"/><circle cx="8.500" cy="2.500" r="1.700"/><circle cx="14.500" cy="2.500" r="1.700"/></svg>
  </aside>
</main>

<!-- Status bar -->
<footer class="flex h-[29px] shrink-0 items-center border-t border-[#e0e3e8] pr-[15px] whitespace-nowrap [&_.bar]:h-3 [&_.bar]:w-px [&_.bar]:bg-[#dcdfe5]">
  <span class="ml-[10px] w-[43px]">页码: 1</span><i class="bar"></i>
  <span class="ml-[9px] w-[55px]">页面: 1/2</span><i class="bar"></i>
  <span class="ml-[9px] w-[52px]">节: 1/1</span>
  <span class="w-24">设置值: 12.2厘米</span><i class="bar"></i>
  <span class="ml-[10px] w-11">行: 10</span>
  <span class="w-[37px]">列: 1</span><i class="bar"></i>
  <span class="ml-[9px] w-[76px]">字数: 76/892</span><i class="bar"></i>
  <button class="ml-1 flex w-[82px] items-center gap-[2px]"><svg class="size-[15px]" viewBox="0 0 15 15"><path d="M6 1H.8v13H6l1.500 1L9 14h5.200V1H9L7.500 2zM5 5l5 5M10 5l-5 5"/></svg>拼写检查<svg class="ml-1 h-1 w-[6px]"><use href="#caret"/></svg></button><i class="bar"></i>
  <button class="ml-1 flex w-[81px] items-center gap-[2px]"><svg class="size-[15px]" viewBox="0 0 15 15"><path d="M4 14H.8V1H6l1.500 1L9 1h5.200v7"/><circle cx="8.500" cy="8" r="3.500"/><path d="M11 11l3 4"/></svg>内容检查<svg class="ml-1 h-1 w-[6px]"><use href="#caret"/></svg></button><i class="bar"></i>

  <div class="ml-auto flex items-center text-[#333b4f]">
    <svg class="size-4" viewBox="0 0 16 16"><path d="M.5 10c3-5.500 12-5.500 15 0-3 5.500-12 5.500-15 0zM8 0v3M3 1.500l1.500 2.500M13 1.500L11.500 4"/><circle cx="8" cy="10" r="3"/></svg>
    <i class="bar ml-3"></i>
    <button class="ml-3 flex size-6 items-center justify-center rounded-sm bg-[#dadfe6]" aria-label="页面视图"><svg class="h-4 w-[14px]" viewBox="0 0 14 16"><path d="M1 1h9l3.200 3v11H1zM4 6.500h6M4 9.500h6"/></svg></button>
    <svg class="ml-[7px] h-4 w-[14px]" viewBox="0 0 14 16"><path d="M0 2h2M3.500 2H14M2.500 6h2M6 6h8M2.500 10h2M6 10h8M0 14h2M3.500 14H14"/></svg>
    <svg class="ml-[11px] h-4 w-[15px]" viewBox="0 0 15 16"><path d="M.8 1.500H6l1.500 1L9 1.500h5.200v12H9l-1.500 1-1.500-1H.8zM7.500 2.500v12"/></svg>
    <svg class="ml-[11px] size-4" viewBox="0 0 16 16"><circle cx="8" cy="8" r="7.300"/><ellipse cx="8" cy="8" rx="3.500" ry="7.300"/><path d="M1.500 5h13M1.500 11h13M8 .7v14.600"/></svg>
    <svg class="ml-[10px] size-[18px]"><use href="#pen"/></svg>
    <i class="bar ml-[13px]"></i>
    <svg class="ml-[14px] size-[15px]" viewBox="0 0 15 15"><path d="M4 .5H.5V4M11 .5h3.500V4M4 14.500H.5V11M11 14.500h3.500V11M4 4h7v7H4z"/></svg>
    <button class="ml-[7px] flex items-center gap-[5px] text-[13px]">112%<svg class="h-1 w-[6px]"><use href="#caret"/></svg></button>
    <button class="ml-[10px] h-[2px] w-[10px] bg-[#333b4f]" aria-label="缩小"></button>
    <input type="range" min="0" max="100" value="50" aria-label="缩放" class="ml-3 h-3 w-[140px] appearance-none bg-linear-to-r from-[#333b4f] from-50% to-[#cfd4de] to-50% bg-[length:100%_1px] bg-center bg-no-repeat [&::-webkit-slider-thumb]:size-3 [&::-webkit-slider-thumb]:appearance-none [&::-webkit-slider-thumb]:rounded-full [&::-webkit-slider-thumb]:border [&::-webkit-slider-thumb]:border-[#333b4f] [&::-webkit-slider-thumb]:bg-[#f5f7fa]">
    <button class="ml-[10px]" aria-label="放大"><svg class="block size-[10px]" viewBox="0 0 10 10"><path d="M5 0v10M0 5h10" stroke-width="2"/></svg></button>
    <svg class="ml-[13px] size-[15px]" viewBox="0 0 15 15"><path d="M5 .5H.5V5M10 .5h4.500V5M5 14.500H.5V10M10 14.500h4.500V10M.5.5l5 5M14.500.5l-5 5M.5 14.500l5-5M14.500 14.500l-5-5"/></svg>
  </div>
</footer>
</div>

<!-- Volume meter at the window edge -->
<div class="absolute right-0 bottom-[127px] z-30 flex h-[59px] w-[10px] flex-col justify-center rounded-l-sm border border-r-0 border-[#3a3d47] bg-[#555967] pl-[3px]">
  <div class="h-[14px] w-1 bg-[repeating-linear-gradient(#2e313a_0_1px,transparent_1px_2px)]"></div>
  <div class="h-4 w-1 bg-[repeating-linear-gradient(#dcd65c_0_1px,transparent_1px_2px)]"></div>
  <div class="h-4 w-1 bg-[repeating-linear-gradient(#5fdcae_0_1px,transparent_1px_2px)]"></div>
</div>

<!-- Site watermark -->
<div class="pointer-events-none absolute right-[10px] bottom-[9px] z-30 flex items-center opacity-85">
  <svg class="h-10 w-[46px]" viewBox="0 0 46 40"><defs><linearGradient id="g1" x1="0" y1="1" x2="1" y2="0"><stop offset="0" stop-color="#3b7fc4"/><stop offset="1" stop-color="#59bdf0"/></linearGradient><linearGradient id="g2" x1="0" y1="1" x2="1" y2="0"><stop offset="0" stop-color="#e6e04a"/><stop offset=".6" stop-color="#4fbf78"/></linearGradient></defs><path d="M45 0C20 1 2 14 1 25c0 8 10 10 18 5 6-4 6-10 0-11-5 0-9 4-8 7 2-3 6-4 8-3 1 3-5 6-9 4C4 23 16 6 45 0z" fill="url(#g1)" stroke="none"/><path d="M22 16c8-4 18-2 19 4 1 10-14 20-37 20 15-2 29-9 29-16 0-4-5-7-11-8z" fill="url(#g2)" stroke="none"/></svg>
  <div class="flex w-[106px] flex-col"><span class="text-[21px] leading-[23px] font-bold whitespace-nowrap text-[#4f92d3]">极光下载站</span><span class="font-['Liberation_Sans',sans-serif] text-base leading-[17px] font-bold text-[#43bd77]">www.xz7.com</span></div>
</div>

<script>
  const labels = [6, 4, 2, ''];
  for (let n = 2; n <= 40; n += 2) labels.push(n);
  document.getElementById('hruler').innerHTML = labels.map(n =>
    `<div class="relative flex flex-1 items-end"><span class="h-[10px] w-px bg-[#8a94ab]"></span><span class="w-[18px] self-center text-center">${n}</span><span class="h-[10px] w-px bg-[#8a94ab]"></span></div>`).join('');
  let marks = '';
  for (let n = 2; n <= 38; n++) marks += `<span class="flex h-3 w-4 -rotate-90 items-center justify-center">${n}</span>`;
  document.getElementById('vruler').innerHTML = marks;
</script>
</body>
</html>
